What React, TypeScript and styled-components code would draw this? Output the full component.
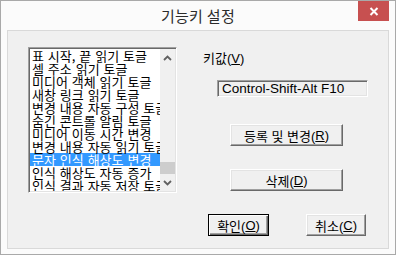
import React from 'react';
import styled, { createGlobalStyle } from 'styled-components';

const GlobalStyle = createGlobalStyle`
  html, body {
    margin: 0;
    padding: 0;
    background: #ffffff;
  }
  body {
    font-family: "Liberation Sans", "Noto Sans CJK KR", sans-serif;
  }
`;

const Window = styled.div`
  width: 396px;
  height: 255px;
  box-sizing: border-box;
  border: 1px solid #a9a9a9;
  background: #fbfbfb;
  display: flex;
  flex-direction: column;
  padding: 0 6px 5px 6px;
`;

const TitleBar = styled.div`
  height: 29px;
  display: grid;
  grid-template-columns: 1fr auto 1fr;
  align-items: start;
`;

const Title = styled.div`
  grid-column: 2;
  align-self: center;
  font-family: "Noto Sans CJK KR", sans-serif;
  font-size: 15px;
  color: #2b2b2b;
  letter-spacing: 0.3px;
`;

const CloseButton = styled.div`
  grid-column: 3;
  justify-self: end;
  width: 31px;
  height: 20px;
  background: #c75050;
  display: flex;
  align-items: center;
  justify-content: center;
`;

const Client = styled.div`
  flex: 1;
  border: 1px solid #d9d9d9;
  background: #f0f0f0;
  display: flex;
  align-items: flex-start;
`;

const ListBox = styled.div`
  margin: 16px 0 0 20px;
  width: 149px;
  height: 146px;
  box-sizing: border-box;
  border-style: solid;
  border-width: 1px;
  border-color: #a0a0a0 #ffffff #ffffff #a0a0a0;
  box-shadow: inset 1px 1px #696969, inset -1px -1px #e3e3e3;
  background: #ffffff;
  padding: 1px;
  display: flex;
`;

const Items = styled.div`
  flex: 1;
  overflow: hidden;
  font-family: "Noto Sans CJK KR", sans-serif;
  font-size: 13px;
  word-spacing: 1px;
`;

const Item = styled.div<{ $selected?: boolean }>`
  height: 13px;
  line-height: 13px;
  padding-left: 2px;
  white-space: nowrap;
  color: ${(p) => (p.$selected ? '#ffffff' : '#000000')};
  background: ${(p) => (p.$selected ? '#3399ff' : 'transparent')};
`;

const ScrollBar = styled.div`
  width: 15px;
  background: #f0f0f0;
  display: flex;
  flex-direction: column;
`;

const ArrowButton = styled.div`
  height: 17px;
  display: flex;
  align-items: center;
  justify-content: center;
`;

const Track = styled.div`
  flex: 1;
  display: flex;
  flex-direction: column;
  justify-content: flex-end;
`;

const Thumb = styled.div`
  height: 12px;
  background: #cdcdcd;
`;

const Side = styled.div`
  margin-left: 26px;
  display: flex;
  flex-direction: column;
  align-items: flex-start;
`;

const Label = styled.div`
  margin-top: 20px;
  font-size: 13px;
  line-height: 15px;
  color: #000;
`;

const Field = styled.div`
  margin: 14px 0 0 14px;
  width: 151px;
  height: 17px;
  box-sizing: border-box;
  border-style: solid;
  border-width: 1px;
  border-color: #a0a0a0 #ffffff #ffffff #a0a0a0;
  box-shadow: inset 1px 1px #696969, inset -1px -1px #e3e3e3;
  background: #f0f0f0;
  font-family: "Liberation Sans", sans-serif;
  font-size: 13.5px;
  line-height: 15px;
  padding-left: 4px;
  color: #000;
  white-space: nowrap;
`;

const Button = styled.div<{ $width: number; $default?: boolean }>`
  width: ${(p) => p.$width}px;
  height: 22px;
  box-sizing: border-box;
  background: #f0f0f0;
  display: flex;
  align-items: center;
  justify-content: center;
  font-size: 13px;
  color: #000;
  border: 1px solid;
  border-color: ${(p) => (p.$default ? '#000000' : '#ffffff #696969 #696969 #ffffff')};
  box-shadow: ${(p) =>
    p.$default
      ? 'inset 1px 1px #ffffff, inset -1px -1px #696969, inset -2px -2px #a0a0a0'
      : 'inset -1px -1px #a0a0a0, inset 1px 1px #e3e3e3'};
`;

const WideButton = styled(Button)<{ $top: number }>`
  margin: ${(p) => p.$top}px 0 0 27px;
`;

const ButtonRow = styled.div`
  margin: 23px 0 0 5px;
  display: flex;
  gap: 37px;
`;

const Key = styled.span`
  text-decoration: underline;
  text-underline-offset: 1px;
`;

const Chevron: React.FC<{ down?: boolean }> = ({ down }) => (
  <svg width="9" height="6" viewBox="0 0 9 6">
    <polyline
      points={down ? '1,1 4.5,4.5 8,1' : '1,5 4.5,1.5 8,5'}
      fill="none"
      stroke="#606060"
      strokeWidth="1.8"
    />
  </svg>
);

const items = [
  '표 시작, 끝 읽기 토글',
  '셀 주소 읽기 토글',
  '미디어 객체 읽기 토글',
  '새창 링크 읽기 토글',
  '변경 내용 자동 구성 토글',
  '숨긴 콘트롤 알림 토글',
  '미디어 이동 시간 변경',
  '변경 내용 자동 읽기 토글',
  '문자 인식 해상도 변경',
  '인식 해상도 자동 증가',
  '인식 결과 자동 저장 토글',
];

const App: React.FC = () => {
  return (
    <>
      <GlobalStyle />
      <Window>
        <TitleBar>
          <Title>기능키 설정</Title>
          <CloseButton>
            <svg width="10" height="9" viewBox="0 0 10 9">
              <path d="M1.5 1 L8.5 8 M8.5 1 L1.5 8" stroke="#ffffff" strokeWidth="2" />
            </svg>
          </CloseButton>
        </TitleBar>
        <Client>
          <ListBox>
            <Items>
              {items.map((text, i) => (
                <Item key={text} $selected={i === 8}>
                  {text}
                </Item>
              ))}
            </Items>
            <ScrollBar>
              <ArrowButton>
                <Chevron />
              </ArrowButton>
              <Track>
                <Thumb />
              </Track>
              <ArrowButton>
                <Chevron down />
              </ArrowButton>
            </ScrollBar>
          </ListBox>
          <Side>
            <Label>
              키값(<Key>V</Key>)
            </Label>
            <Field>Control-Shift-Alt F10</Field>
            <WideButton $width={113} $top={27}>
              등록 및 변경(<Key>R</Key>)
            </WideButton>
            <WideButton $width={113} $top={23}>
              삭제(<Key>D</Key>)
            </WideButton>
            <ButtonRow>
              <Button $width={61} $default>
                확인(<Key>O</Key>)
              </Button>
              <Button $width={60}>
                취소(<Key>C</Key>)
              </Button>
            </ButtonRow>
          </Side>
        </Client>
      </Window>
    </>
  );
};

export default App;
